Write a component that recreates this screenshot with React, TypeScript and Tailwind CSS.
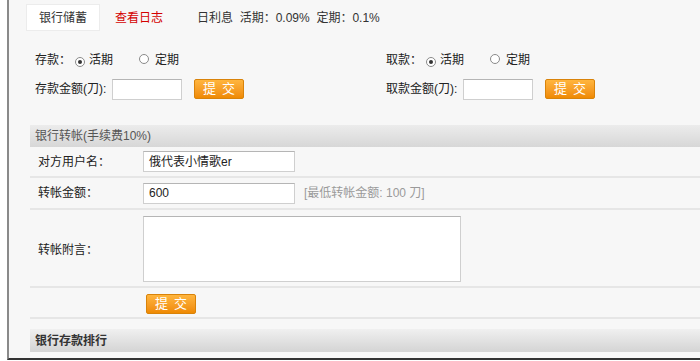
import React from "react";

const font = { fontFamily: '"Liberation Sans", "Noto Sans CJK SC", sans-serif' };

function Radio({ checked }: { checked?: boolean }) {
  return (
    <span className="inline-flex items-center justify-center w-[10px] h-[10px] rounded-full border border-[#8a8a8a] bg-white">
      {checked && <span className="w-[4px] h-[4px] rounded-full bg-[#333]" />}
    </span>
  );
}

function Btn() {
  return (
    <span className="inline-flex items-center justify-center w-[50px] h-[20px] rounded-[2px] border border-[#d9830a] bg-gradient-to-b from-[#ffb53d] to-[#ef8a00] text-white text-[13px] tracking-[6px] pl-[6px]">
      提交
    </span>
  );
}

function Input({ w, value }: { w: string; value?: string }) {
  return (
    <span className={`inline-flex items-center h-[21px] ${w} bg-white border border-[#cfcfcf] border-t-[#b5b5b5] pl-[5px] text-[12px] text-[#222]`}>
      {value}
    </span>
  );
}

export default function App() {
  return (
    <div className="w-[700px] h-[361px] bg-white overflow-hidden text-[12px] text-[#222]" style={font}>
      <div className="ml-[7px] w-[693px] h-[360px] border-l-2 border-b-2 border-l-[#8a8a8a] border-b-[#333] bg-[#f7f7f7] flex flex-col">
        {/* tabs */}
        <div className="flex items-center pt-[4px] pl-[17px] h-[31px]">
          <div className="w-[74px] h-[27px] bg-white border border-[#ececec] flex items-center justify-center text-[#333]">银行储蓄</div>
          <div className="ml-[15px] text-[#d40000]">查看日志</div>
          <div className="ml-[34px] text-[#333]">日利息&nbsp;&nbsp;活期：0.09%&nbsp;&nbsp;定期：0.1%</div>
        </div>
        {/* deposit / withdraw */}
        <div className="flex mt-[19px]">
          <div className="w-[351px] pl-[26px] flex flex-col gap-[9px]">
            <div className="flex items-center h-[20px]">
              <span>存款：</span>
              <span className="ml-[4px]"><Radio checked /></span>
              <span className="ml-[4px]">活期</span>
              <span className="ml-[26px]"><Radio /></span>
              <span className="ml-[6px]">定期</span>
            </div>
            <div className="flex items-center h-[20px]">
              <span className="w-[77px] whitespace-nowrap overflow-visible">存款金额(刀):</span>
              <Input w="w-[70px]" />
              <span className="ml-[12px]"><Btn /></span>
            </div>
          </div>
          <div className="pl-[26px] flex flex-col gap-[9px]">
            <div className="flex items-center h-[20px]">
              <span>取款：</span>
              <span className="ml-[4px]"><Radio checked /></span>
              <span className="ml-[4px]">活期</span>
              <span className="ml-[26px]"><Radio /></span>
              <span className="ml-[6px]">定期</span>
            </div>
            <div className="flex items-center h-[20px]">
              <span className="w-[77px] whitespace-nowrap">取款金额(刀):</span>
              <Input w="w-[70px]" />
              <span className="ml-[12px]"><Btn /></span>
            </div>
          </div>
        </div>
        {/* transfer section */}
        <div className="ml-[21px] mt-[26px] flex flex-col">
          <div className="h-[22px] flex items-center pl-[5px] text-[#555] bg-gradient-to-b from-[#ececec] to-[#d7d7d7]">银行转帐(手续费10%)</div>
          <div className="h-[31px] flex items-center border-b-2 border-[#e6e6e6]">
            <span className="w-[113px] pl-[8px]">对方用户名：</span>
            <Input w="w-[152px]" value="俄代表小情歌er" />
          </div>
          <div className="h-[32px] flex items-center border-b-2 border-[#e6e6e6]">
            <span className="w-[113px] pl-[8px]">转帐金额：</span>
            <Input w="w-[152px]" value="600" />
            <span className="ml-[9px] text-[#9a9a9a]">[最低转帐金额: 100 刀]</span>
          </div>
          <div className="h-[78px] flex items-center border-b-2 border-[#e6e6e6]">
            <span className="w-[113px] pl-[8px] pt-[4px]">转帐附言：</span>
            <span className="mt-[2px] w-[318px] h-[66px] bg-white border border-[#cfcfcf] border-t-[#b5b5b5]" />
          </div>
          <div className="h-[31px] flex items-center border-b-2 border-[#e6e6e6] pl-[116px] pt-[2px]">
            <Btn />
          </div>
          <div className="mt-[10px] h-[23px] flex items-center pl-[5px] font-bold text-[#333] bg-gradient-to-b from-[#f0f0f0] to-[#d4d4d4]">银行存款排行</div>
        </div>
      </div>
    </div>
  );
}
